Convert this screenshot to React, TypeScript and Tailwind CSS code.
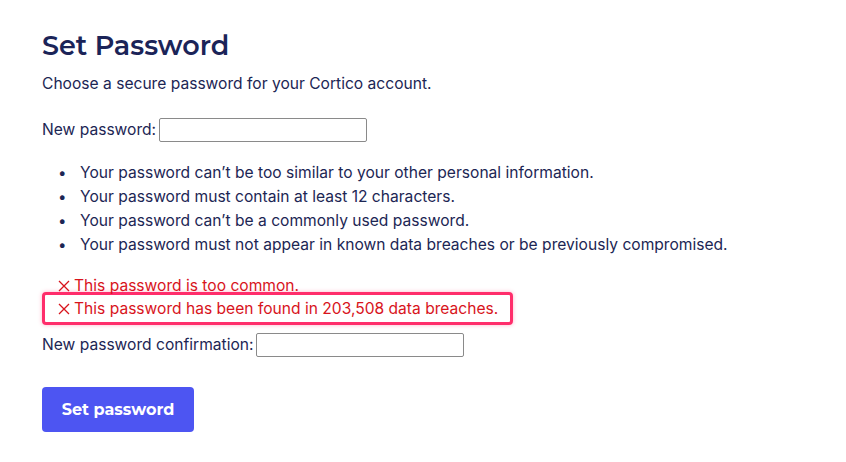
import React from "react";

const rules = [
  "Your password can’t be too similar to your other personal information.",
  "Your password must contain at least 12 characters.",
  "Your password can’t be a commonly used password.",
  "Your password must not appear in known data breaches or be previously compromised.",
];

// 얇은 X 아이콘
function Cross() {
  return (
    <svg width="12" height="12" viewBox="0 0 12 12" className="mr-[4px] shrink-0">
      <path d="M1 1L11 11M11 1L1 11" stroke="currentColor" strokeWidth="1.3" fill="none" />
    </svg>
  );
}

export default function App() {
  return (
    <div className="min-h-[462px] bg-white px-[42px] pt-[28px] font-['Inter','Liberation_Sans',sans-serif] text-[15.6px] text-[#1c2654]">
      <h1 className="font-['Montserrat','Inter',sans-serif] text-[27px] font-semibold leading-[36px] text-[#1b2458]">
        Set Password
      </h1>
      <p className="mt-[8px] leading-[24px]">
        Choose a secure password for your Cortico account.
      </p>

      <div className="mt-[22px] flex items-center gap-[3px] leading-[24px]">
        <label>New password:</label>
        <input
          type="password"
          className="h-[24px] w-[208px] rounded-[2px] border border-[#8a8a8a] bg-white"
        />
      </div>

      {/* 비밀번호 규칙 */}
      <ul className="mt-[19px] leading-[24px]">
        {rules.map((rule) => (
          <li key={rule} className="flex items-center">
            <span className="w-[38px] pl-[16px] text-[15px]">•</span>
            <span>{rule}</span>
          </li>
        ))}
      </ul>

      {/* 에러 메시지 */}
      <div className="mt-[17px] text-[#d8141c]">
        <div className="flex items-center pl-[16px] leading-[24px]">
          <Cross />
          This password is too common.
        </div>
        <div className="-mt-[6px] w-[471px] rounded-[4px] border-[3px] border-[#ff2d6b] shadow-[0_0_4px_rgba(255,45,107,0.35)]">
          <div className="flex items-center pl-[13px] leading-[27px]">
            <Cross />
            This password has been found in 203,508 data breaches.
          </div>
        </div>
      </div>

      <div className="mt-[8px] flex items-center gap-[3px] leading-[24px]">
        <label>New password confirmation:</label>
        <input
          type="password"
          className="h-[24px] w-[208px] rounded-[2px] border border-[#8a8a8a] bg-white"
        />
      </div>

      <button className="mt-[30px] h-[45px] w-[152px] rounded-[4px] bg-[#4d55f2] font-['Montserrat','Inter',sans-serif] text-[16px] font-bold text-white">
        Set password
      </button>
    </div>
  );
}
